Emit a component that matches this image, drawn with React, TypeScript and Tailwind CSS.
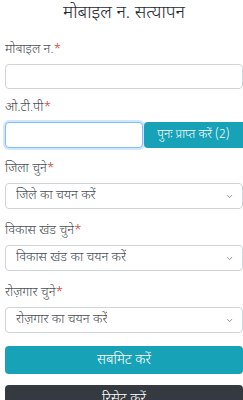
import { ChevronDown } from "lucide-react";

const font = {
  fontFamily:
    '"Noto Sans Devanagari", "Lohit Devanagari", "FreeSans", "Noto Sans", "Liberation Sans", sans-serif',
};

function Label({ text }: { text: string }) {
  return (
    <label className="flex h-5 items-center text-[13px] font-light leading-5 text-[#4a4f55]">
      {text}
      <span className="text-[#c0392b]">*</span>
    </label>
  );
}

function SelectBox({ placeholder }: { placeholder: string }) {
  return (
    <div className="mt-1 flex h-[26px] w-full items-center justify-between rounded border border-[#ced4da] bg-white pl-[10px] pr-[8px] text-[13px] font-light text-[#495057]">
      <span className="truncate">{placeholder}</span>
      <ChevronDown className="h-[9px] w-[9px] shrink-0 text-[#6c757d]" strokeWidth={2} />
    </div>
  );
}

export default function App() {
  return (
    <div className="w-[243px] bg-white pl-[5px]" style={font}>
      <h2 className="h-[28px] text-center text-[18px] font-light leading-[28px] text-[#262b30]">
        मोबाइल न. सत्यापन
      </h2>

      <div className="mt-[12px]">
        <Label text="मोबाइल न." />
        <input className="mt-1 block h-[25px] w-full rounded border border-[#ced4da] bg-white px-2 text-[13px] outline-none" />
      </div>

      <div className="mt-[9px]">
        <Label text="ओ.टी.पी" />
        <div className="mt-1 flex h-[26px] items-stretch gap-px">
          <input className="min-w-0 flex-1 rounded border border-[#80bdff] bg-white px-2 text-[13px] shadow-[0_0_0_2px_rgba(0,123,255,0.18)] outline-none" />
          <button className="w-[99px] shrink-0 rounded-l bg-[#17a2b8] text-[12px] font-light text-white">
            पुनः प्राप्त करें (2)
          </button>
        </div>
      </div>

      <div className="mt-[11px]">
        <Label text="जिला चुने" />
        <SelectBox placeholder="जिले का चयन करें" />
      </div>

      <div className="mt-[12px]">
        <Label text="विकास खंड चुने" />
        <SelectBox placeholder="विकास खंड का चयन करें" />
      </div>

      <div className="mt-[12px]">
        <Label text="रोज़गार चुने" />
        <SelectBox placeholder="रोज़गार का चयन करें" />
      </div>

      <button className="mt-[13px] block h-[28px] w-full rounded bg-[#17a2b8] text-[14px] font-light text-white">
        सबमिट करें
      </button>
      <button className="mt-[11px] block h-[28px] w-full rounded bg-[#343a40] text-[14px] font-light text-white">
        रिसेट करें
      </button>
    </div>
  );
}
